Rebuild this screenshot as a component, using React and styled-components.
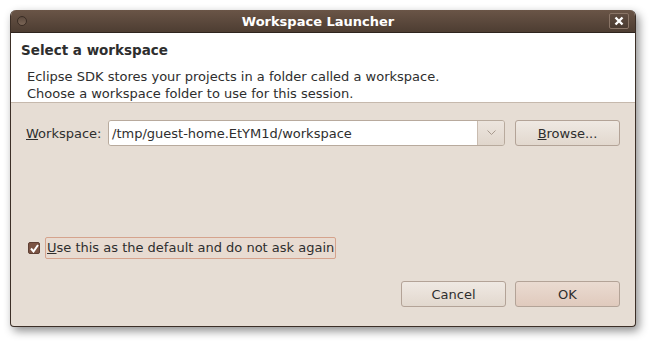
import styled, { createGlobalStyle } from 'styled-components';

const GlobalStyle = createGlobalStyle`
  html, body {
    margin: 0;
    padding: 0;
    background: #ffffff;
    font-family: "DejaVu Sans", "Liberation Sans", sans-serif;
  }
`;

const Page = styled.div`
  width: 653px;
  height: 344px;
  padding: 10px 0 0 10px;
  box-sizing: border-box;
`;

const Window = styled.div`
  width: 626px;
  height: 317px;
  display: flex;
  flex-direction: column;
  border-radius: 6px 6px 4px 4px;
  border: 1px solid #3c2f27;
  border-top: none;
  box-sizing: border-box;
  overflow: hidden;
  background: #e6ddd4;
  box-shadow: 3px 4px 10px rgba(0, 0, 0, 0.45);
`;

const TitleBar = styled.div`
  height: 22px;
  flex-shrink: 0;
  display: flex;
  align-items: center;
  justify-content: space-between;
  padding: 0 6px 0 6px;
  background: linear-gradient(#6a5547, #4d3d32);
  border-bottom: 1px solid #2e241e;
  color: #ffffff;
  font-weight: bold;
  font-size: 13px;
`;

const Dot = styled.span`
  width: 10px;
  height: 10px;
  border-radius: 50%;
  border: 1px solid #3a2d25;
  background: linear-gradient(#5c4a3e, #7a6556);
  box-sizing: border-box;
`;

const Title = styled.span`
  flex: 1;
  text-align: center;
`;

const CloseBtn = styled.span`
  width: 20px;
  height: 16px;
  border: 1px solid #8a7567;
  border-radius: 2px;
  display: flex;
  align-items: center;
  justify-content: center;
  background: linear-gradient(#5f4c40, #4a3b31);
  box-sizing: border-box;
`;

const Header = styled.div`
  background: #ffffff;
  border-bottom: 1px solid #c6b9ad;
  padding: 9px 10px 0;
  height: 70px;
  box-sizing: border-box;
  flex-shrink: 0;
  color: #2e2e2e;
`;

const HeaderTitle = styled.div`
  font-weight: bold;
  font-size: 13.5px;
  margin-bottom: 10px;
`;

const HeaderText = styled.div`
  font-size: 13px;
  line-height: 17px;
  padding-left: 6px;
`;

const Body = styled.div`
  flex: 1;
  display: flex;
  flex-direction: column;
  padding: 17px 15px 19px 15px;
  color: #2e2e2e;
  font-size: 13px;
`;

const Row = styled.div`
  display: flex;
  align-items: center;
`;

const Label = styled.span`
  width: 82px;
`;

const U = styled.span`
  text-decoration: underline;
`;

const Combo = styled.div`
  width: 397px;
  height: 26px;
  display: flex;
  border: 1px solid #b8aa9d;
  border-radius: 3px;
  box-sizing: border-box;
  overflow: hidden;
`;

const Input = styled.div`
  flex: 1;
  background: #ffffff;
  display: flex;
  align-items: center;
  padding-left: 3px;
  border-right: 1px solid #c9bcb0;
`;

const Arrow = styled.div`
  width: 26px;
  display: flex;
  align-items: center;
  justify-content: center;
  background: linear-gradient(#ece5de, #e0d6cc);
`;

const Button = styled.div`
  width: 105px;
  height: 26px;
  box-sizing: border-box;
  border: 1px solid #b3a397;
  border-radius: 3px;
  display: flex;
  align-items: center;
  justify-content: center;
  background: ${p =>
    p.$default
      ? 'linear-gradient(#eadbd1, #e0cabd)'
      : 'linear-gradient(#efe9e3, #e2d8ce)'};
  margin-left: ${p => p.$gap || 0}px;
`;

const Spacer = styled.div`
  flex: 1;
`;

const CheckRow = styled.div`
  display: flex;
  align-items: center;
  margin-left: 2px;
  margin-bottom: 22px;
`;

const Box = styled.span`
  width: 12px;
  height: 12px;
  border-radius: 2px;
  background: #7b5444;
  border: 1px solid #5e3f33;
  box-sizing: border-box;
  display: flex;
  align-items: center;
  justify-content: center;
`;

const CheckLabel = styled.span`
  margin-left: 5px;
  padding: 2px 1px 3px;
  border: 1px solid #d5a38d;
  border-radius: 2px;
  background: #e8dbd1;
`;

const ButtonRow = styled.div`
  display: flex;
  justify-content: flex-end;
`;

export default function App() {
  return (
    <>
      <GlobalStyle />
      <Page>
        <Window>
          <TitleBar>
            <Dot />
            <Title>Workspace Launcher</Title>
            <CloseBtn>
              <svg width="10" height="10" viewBox="0 0 10 10">
                <path d="M1.5 1.5 L8.5 8.5 M8.5 1.5 L1.5 8.5" stroke="#fff" strokeWidth="2.4" />
              </svg>
            </CloseBtn>
          </TitleBar>
          <Header>
            <HeaderTitle>Select a workspace</HeaderTitle>
            <HeaderText>Eclipse SDK stores your projects in a folder called a workspace.</HeaderText>
            <HeaderText>Choose a workspace folder to use for this session.</HeaderText>
          </Header>
          <Body>
            <Row>
              <Label>
                <U>W</U>orkspace:
              </Label>
              <Combo>
                <Input>/tmp/guest-home.EtYM1d/workspace</Input>
                <Arrow>
                  <svg width="9" height="6" viewBox="0 0 9 6">
                    <path d="M0.5 0.5 L4.5 4.5 L8.5 0.5" fill="none" stroke="#a89a8e" strokeWidth="1" />
                  </svg>
                </Arrow>
              </Combo>
              <Button $gap={10}>
                <span>
                  <U>B</U>rowse...
                </span>
              </Button>
            </Row>
            <Spacer />
            <CheckRow>
              <Box>
                <svg width="9" height="9" viewBox="0 0 9 9">
                  <path d="M1 4.5 L3.5 7.5 L8 1" fill="none" stroke="#fff" strokeWidth="2" />
                </svg>
              </Box>
              <CheckLabel>
                <U>U</U>se this as the default and do not ask again
              </CheckLabel>
            </CheckRow>
            <ButtonRow>
              <Button>Cancel</Button>
              <Button $default $gap={9}>OK</Button>
            </ButtonRow>
          </Body>
        </Window>
      </Page>
    </>
  );
}
